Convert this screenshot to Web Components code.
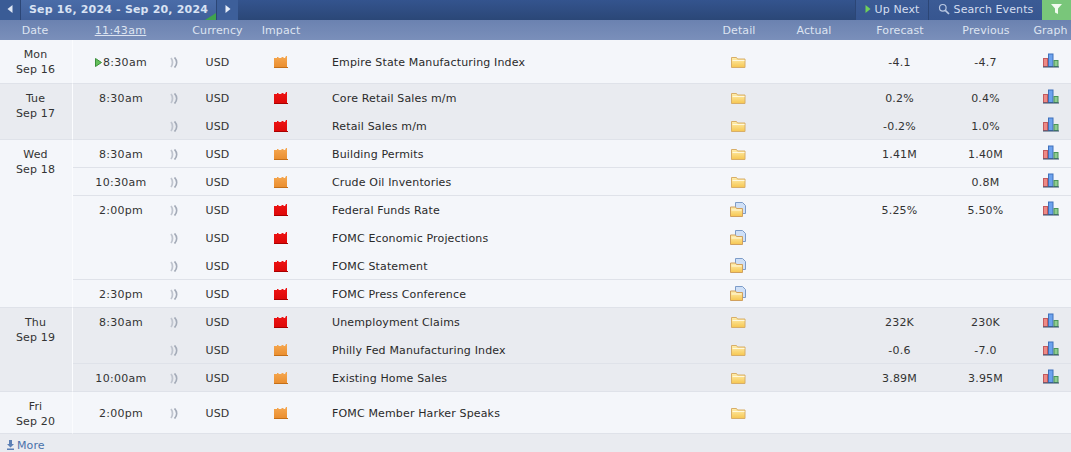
<!DOCTYPE html>
<html><head><meta charset="utf-8"><style>
html,body{margin:0;padding:0;background:#f4f6fa;overflow:hidden}
body{width:1071px;height:452px;font:11px "DejaVu Sans",sans-serif;color:#222}
</style></head><body>
<ff-calendar>
 <ff-toolbar slot="toolbar"></ff-toolbar>
 <ff-head slot="head"></ff-head>
 <ff-day day="Mon" date="Sep 16" tone="a">
  <ff-row h="44" time="8:30am" now impact="m" name="Empire State Manufacturing Index" fc="-4.1" pv="-4.7" graph></ff-row>
 </ff-day>
 <ff-day day="Tue" date="Sep 17" tone="b">
  <ff-row time="8:30am" impact="h" name="Core Retail Sales m/m" fc="0.2%" pv="0.4%" graph noline></ff-row>
  <ff-row impact="h" name="Retail Sales m/m" fc="-0.2%" pv="1.0%" graph></ff-row>
 </ff-day>
 <ff-day day="Wed" date="Sep 18" tone="a">
  <ff-row time="8:30am" impact="m" name="Building Permits" fc="1.41M" pv="1.40M" graph></ff-row>
  <ff-row time="10:30am" impact="m" name="Crude Oil Inventories" pv="0.8M" graph></ff-row>
  <ff-row time="2:00pm" impact="h" name="Federal Funds Rate" fc="5.25%" pv="5.50%" graph doc noline></ff-row>
  <ff-row impact="h" name="FOMC Economic Projections" doc noline></ff-row>
  <ff-row impact="h" name="FOMC Statement" doc></ff-row>
  <ff-row time="2:30pm" impact="h" name="FOMC Press Conference" doc></ff-row>
 </ff-day>
 <ff-day day="Thu" date="Sep 19" tone="b">
  <ff-row time="8:30am" impact="h" name="Unemployment Claims" fc="232K" pv="230K" graph noline></ff-row>
  <ff-row impact="m" name="Philly Fed Manufacturing Index" fc="-0.6" pv="-7.0" graph></ff-row>
  <ff-row time="10:00am" impact="m" name="Existing Home Sales" fc="3.89M" pv="3.95M" graph></ff-row>
 </ff-day>
 <ff-day day="Fri" date="Sep 20" tone="a">
  <ff-row h="42" time="2:00pm" impact="m" name="FOMC Member Harker Speaks"></ff-row>
 </ff-day>
 <ff-more></ff-more>
</ff-calendar>
<script>
const COLS='73px 90px 22px 65px 62px 396px 60px 90px 82px 90px 41px';
const def=(n,c)=>customElements.define(n,c);
def('ff-calendar',class extends HTMLElement{constructor(){super();this.attachShadow({mode:'open'}).innerHTML=`<style>:host{display:flex;flex-direction:column;width:1071px}</style><slot name="toolbar"></slot><slot name="head"></slot><slot></slot>`}});
def('ff-toolbar',class extends HTMLElement{constructor(){super();this.attachShadow({mode:'open'}).innerHTML=`<style>
:host{display:flex;height:20px;background:linear-gradient(#34548e,#2b4777);color:#dfe7f4;box-sizing:border-box}
.c{display:flex;align-items:center;justify-content:center;box-sizing:border-box;height:20px;padding-bottom:2px}
.nav{background:#3a5c96;width:20px}.nav.r{width:21px;background:#3d5f9a}
.date{width:197px;background:linear-gradient(#4a6ca8,#41609a);border-left:1px solid #2c4676;border-right:1px solid #2c4676;font-weight:bold;font-size:11px;color:#d8e2f3;position:relative;letter-spacing:.18px}
.date:after{content:"";position:absolute;right:0;bottom:0;border-style:solid;border-width:0 0 7px 11px;border-color:transparent transparent #3fa34d transparent}
.sp{flex:1}
.btn{background:linear-gradient(#3b5b95,#375690);border-left:1px solid #2c4676;gap:4px;font-size:11px;letter-spacing:.1px;color:#d4def0}
.up{width:73px}.se{width:114px}
.fi{width:29px;background:#79c67a}
</style>
<div class="c nav"><svg width="6" height="8" viewBox="0 0 6 8"><path d="M5.500 0v8L.5 4z" fill="#dfe7f4"/></svg></div>
<div class="c date">Sep 16, 2024 - Sep 20, 2024</div>
<div class="c nav r"><svg width="6" height="8" viewBox="0 0 6 8"><path d="M.5 0v8l5-4z" fill="#e8eef8"/></svg></div>
<div class="sp"></div>
<div class="c btn up"><svg width="6" height="8" viewBox="0 0 6 8"><path d="M.5 0v8l5-4z" fill="#6fd05a"/></svg><span>Up Next</span></div>
<div class="c btn se"><svg width="12" height="12" viewBox="0 0 12 12" fill="none" stroke="#b9c8e2" stroke-width="1.200"><circle cx="4.800" cy="4.800" r="3.300"/><path d="M7.300 7.300l3.700 3.700" stroke-width="1.700"/></svg><span>Search Events</span></div>
<div class="c fi"><svg width="11" height="10" viewBox="0 0 11 10"><path d="M0 0h11L7 4.500V10L4 8.500v-4z" fill="#f2fbf0"/></svg></div>`}});
def('ff-head',class extends HTMLElement{constructor(){super();const cells=['Date','<u>11:43am</u>','','Currency','Impact','','Detail','Actual','Forecast','Previous','Graph'];
this.attachShadow({mode:'open'}).innerHTML=`<style>
:host{display:grid;grid-template-columns:${COLS};height:20px;align-items:center;text-align:center;background:linear-gradient(#6b82b0,#7a8fba);color:#dde4f1;font-size:11px;letter-spacing:.1px}
.d{padding-right:3px}
.t{padding-left:5px;letter-spacing:.35px}
.s{padding-left:2px}
</style>`+cells.map((c,i)=>`<div class="${i==0?'d':i==1?'t':(i>=6&&i<=9)?'s':''}">${c}</div>`).join('')}});
def('ff-day',class extends HTMLElement{constructor(){super();const t=this.getAttribute('tone');
this.attachShadow({mode:'open'}).innerHTML=`<style>
:host{display:grid;grid-template-columns:73px 1fr;background:${t=='b'?'#e9ebf0':'#f4f6fa'}}
.d{box-sizing:border-box;border-right:1px solid #fbfcfe;text-align:center;padding:7px 1px 0 0;line-height:15px;color:#333;border-bottom:1px solid #dfe2e9;letter-spacing:.15px}
.r{display:flex;flex-direction:column}
</style><div class="d">${this.getAttribute('day')}<br>${this.getAttribute('date')}</div><div class="r"><slot></slot></div>`}});
const imp=(id,f,t,b)=>`<svg width="14" height="12" viewBox="0 0 14 12"><defs><linearGradient id="${id}" x1="0" y1="0" x2="0" y2="1"><stop offset="0" stop-color="${t}"/><stop offset="1" stop-color="${f}"/></linearGradient></defs><path d="M0 2h3V1h1l1 1h2l1-1h1l1 1h1l1-2h1v12H0z" fill="url(#${id})"/><path d="M0 11.500h14" stroke="${b}"/></svg>`;
const ICON={
 h:imp('gh','#dc0808','#ee1414','#a80000'),
 m:imp('gm','#e98c2c','#f6a851','#c46f18'),
 folder:`<svg width="15" height="12" viewBox="0 0 15 12"><defs><linearGradient id="f" x1="0" y1="0" x2="0" y2="1"><stop offset="0" stop-color="#ffefb0"/><stop offset="1" stop-color="#f6c650"/></linearGradient></defs><path d="M.5 1.500h5l1 1.500h7.500v8.500H.5z" fill="url(#f)" stroke="#d8ae68"/><path d="M1.500 4h12v1h-12z" fill="#fff8dc"/></svg>`,
 doc:`<svg width="16" height="15" viewBox="0 0 16 15" style="position:relative;top:-1px"><path d="M5.500.5h7l3 3v8h-10z" fill="#cfe0f7" stroke="#7d9cc8"/><defs><linearGradient id="f2" x1="0" y1="0" x2="0" y2="1"><stop offset="0" stop-color="#ffefb0"/><stop offset="1" stop-color="#f6c650"/></linearGradient></defs><path d="M.5 5h5l1 1.500h6v8H.5z" fill="url(#f2)" stroke="#d0a05e"/><path d="M1.500 7.500h10v1h-10z" fill="#fff8dc"/></svg>`,
 graph:`<svg width="16" height="15" viewBox="0 0 16 15" style="position:relative;top:-2px"><rect x=".5" y="5.500" width="4" height="8" fill="#ee8a86" stroke="#c25a5e"/><rect x="5.500" y="1" width="4.500" height="12.500" fill="#6ca2ee" stroke="#3f70bb"/><rect x="11" y="7.500" width="4" height="6" fill="#8dcb8f" stroke="#4a9558"/><path d="M0 14h16" stroke="#34506f"/></svg>`,
 sound:`<svg width="8" height="11" viewBox="0 0 8 11" fill="none" stroke="#a4abb8" stroke-width="1.800"><path d="M1 1c2 2.500 2 6.500 0 9" stroke="#bfc4ce"/><path d="M4.500.5c2.800 3 2.800 7 0 10"/></svg>`};
def('ff-row',class extends HTMLElement{constructor(){super();const g=n=>this.getAttribute(n)||'',h=g('h')||28;
this.attachShadow({mode:'open'}).innerHTML=`<style>
:host{display:grid;grid-template-columns:90px 22px 65px 62px 396px 60px 90px 82px 90px 41px;height:${h}px;box-sizing:border-box;${this.hasAttribute('noline')?'':'box-shadow:inset 0 -1px #dfe2e9;'}align-items:center;text-align:center;color:#333;letter-spacing:.1px}
.name{text-align:left;padding-left:20px;letter-spacing:.15px;color:#2a2a2a}
.t{padding-left:6px;display:flex;justify-content:center;align-items:center;gap:1px;letter-spacing:.3px}
.i{display:flex;justify-content:center;align-items:center}
.imp{padding-left:1px;padding-right:1px}
.v{padding-left:1px;letter-spacing:.2px}
</style>
<div class="t">${this.hasAttribute('now')?`<svg width="7" height="9" viewBox="0 0 7 9"><path d="M.5.5v8l6-4z" fill="#63c05a" stroke="#3c8f3c"/></svg>`:''}<span>${g('time')}</span></div>
<div class="i">${ICON.sound}</div><div>USD</div><div class="i imp">${ICON[g('impact')]}</div><div class="name">${g('name')}</div>
<div class="i">${this.hasAttribute('doc')?ICON.doc:ICON.folder}</div><div></div><div class="v">${g('fc')}</div><div class="v">${g('pv')}</div><div class="i">${this.hasAttribute('graph')?ICON.graph:''}</div>`}});
def('ff-more',class extends HTMLElement{constructor(){super();this.attachShadow({mode:'open'}).innerHTML=`<style>:host{display:flex;align-items:center;height:18px;box-sizing:border-box;padding:4px 0 0 7px;background:#e9ebf0;color:#4a72ab;gap:3px;font-size:11px;letter-spacing:.1px}</style><svg width="7" height="10" viewBox="0 0 7 10"><path d="M2 0h3v4h2L3.500 7.500 0 4h2zM0 8.500h7V10H0z" fill="#5b7fb5"/></svg><span>More</span>`}});
</script></body></html>
